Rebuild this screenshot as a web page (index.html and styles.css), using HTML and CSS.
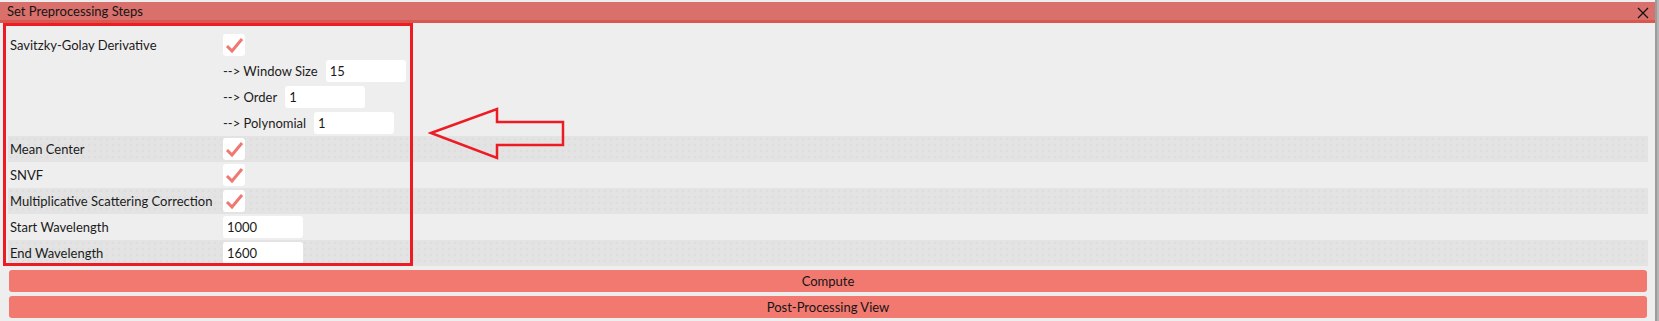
FILE: index.html
```
<!DOCTYPE html>
<html lang="en">
<head>
    <meta charset="UTF-8">
    <title>Set Preprocessing Steps</title>
    <link rel="stylesheet" href="styles.css">
</head>
<body>
    <div class="window">
        <div class="titlebar">
            <span class="title">Set Preprocessing Steps</span>
            <svg class="close" width="12" height="12" viewBox="0 0 12 12"><path d="M1 1 L11 11 M11 1 L1 11"/></svg>
        </div>

        <div class="content">
            <!-- Savitzky-Golay with its parameters -->
            <div class="item">
                <div class="row">
                    <span class="label">Savitzky-Golay Derivative</span>
                    <span class="check"><svg viewBox="0 0 22 22"><path d="M4 12 L9 17 L19 5"/></svg></span>
                </div>
                <div class="row sub">
                    <span class="sublabel">--&gt; Window Size</span>
                    <span class="input">15</span>
                </div>
                <div class="row sub">
                    <span class="sublabel">--&gt; Order</span>
                    <span class="input">1</span>
                </div>
                <div class="row sub">
                    <span class="sublabel">--&gt; Polynomial</span>
                    <span class="input">1</span>
                </div>
            </div>
            <div class="item shaded">
                <div class="row">
                    <span class="label">Mean Center</span>
                    <span class="check"><svg viewBox="0 0 22 22"><path d="M4 12 L9 17 L19 5"/></svg></span>
                </div>
            </div>
            <div class="item">
                <div class="row">
                    <span class="label">SNVF</span>
                    <span class="check"><svg viewBox="0 0 22 22"><path d="M4 12 L9 17 L19 5"/></svg></span>
                </div>
            </div>
            <div class="item shaded">
                <div class="row">
                    <span class="label">Multiplicative Scattering Correction</span>
                    <span class="check"><svg viewBox="0 0 22 22"><path d="M4 12 L9 17 L19 5"/></svg></span>
                </div>
            </div>
            <div class="item">
                <div class="row">
                    <span class="label">Start Wavelength</span>
                    <span class="input">1000</span>
                </div>
            </div>
            <div class="item shaded">
                <div class="row">
                    <span class="label">End Wavelength</span>
                    <span class="input">1600</span>
                </div>
            </div>

            <div class="buttons">
                <div class="button">Compute</div>
                <div class="button">Post-Processing View</div>
            </div>
        </div>

        <!-- annotation drawn over the screenshot -->
        <div class="mark-box"></div>
        <svg class="mark-arrow" width="140" height="56" viewBox="0 0 140 56">
            <path d="M3 27 L69 3 L69 16 L135 16 L135 39 L69 39 L69 52 Z"/>
        </svg>
    </div>
</body>
</html>
```

FILE: styles.css
```
body {
    margin: 0;
    padding: 0;
    background-color: #b5b5b5;
    font-family: 'Lato', 'Open Sans', sans-serif;
    font-size: 13px;
    color: #1b1b1b;
}
.window {
    position: relative;
    width: 1657px;
    height: 321px;
    padding-top: 2px;
    box-sizing: border-box;
    background-color: #efeeee;
    border-right: 2px solid #9c9c9c;
    overflow: hidden;
}
.titlebar {
    display: flex;
    align-items: center;
    justify-content: space-between;
    height: 18px;
    padding: 0 7px;
    background-color: #d9706c;
    border-bottom: 3px solid #d8574f;
}
.title {
    font-size: 13px;
    color: #151515;
}
.close {
    display: block;
    margin-right: -1px;
    margin-top: 4px;
}
.close path {
    stroke: #111;
    stroke-width: 1.2;
}
.content {
    padding: 9px 7px 0 8px;
}
.row {
    display: flex;
    align-items: center;
    height: 26px;
    padding-left: 2px;
}
.label {
    width: 213px;
}
.sub {
    padding-left: 215px;
}
.sublabel {
    margin-right: 8px;
}
.shaded {
    background-color: #e3e3e3;
    background-image: radial-gradient(#d6d6d6 0.6px, transparent 0.8px);
    background-size: 6px 6px;
}
.check {
    display: block;
    width: 22px;
    height: 22px;
    background: #fff;
    border-radius: 3px;
}
.check svg {
    display: block;
    width: 22px;
    height: 22px;
}
.check path {
    fill: none;
    stroke: #f07872;
    stroke-width: 3;
}
.input {
    display: block;
    width: 76px;
    height: 22px;
    line-height: 22px;
    padding-left: 4px;
    background: #fff;
    border-radius: 3px;
}
.buttons {
    display: flex;
    flex-direction: column;
    gap: 4px;
    padding: 4px 1px 0 1px;
}
.button {
    height: 22px;
    line-height: 22px;
    text-align: center;
    background-color: #f27970;
    border-radius: 3px;
    color: #151515;
}
.mark-box {
    position: absolute;
    left: 3px;
    top: 23px;
    width: 404px;
    height: 237px;
    border: 3px solid #ed1c24;
}
.mark-arrow {
    position: absolute;
    left: 428px;
    top: 106px;
}
.mark-arrow path {
    fill: none;
    stroke: #ed1c24;
    stroke-width: 2.5;
}
```
